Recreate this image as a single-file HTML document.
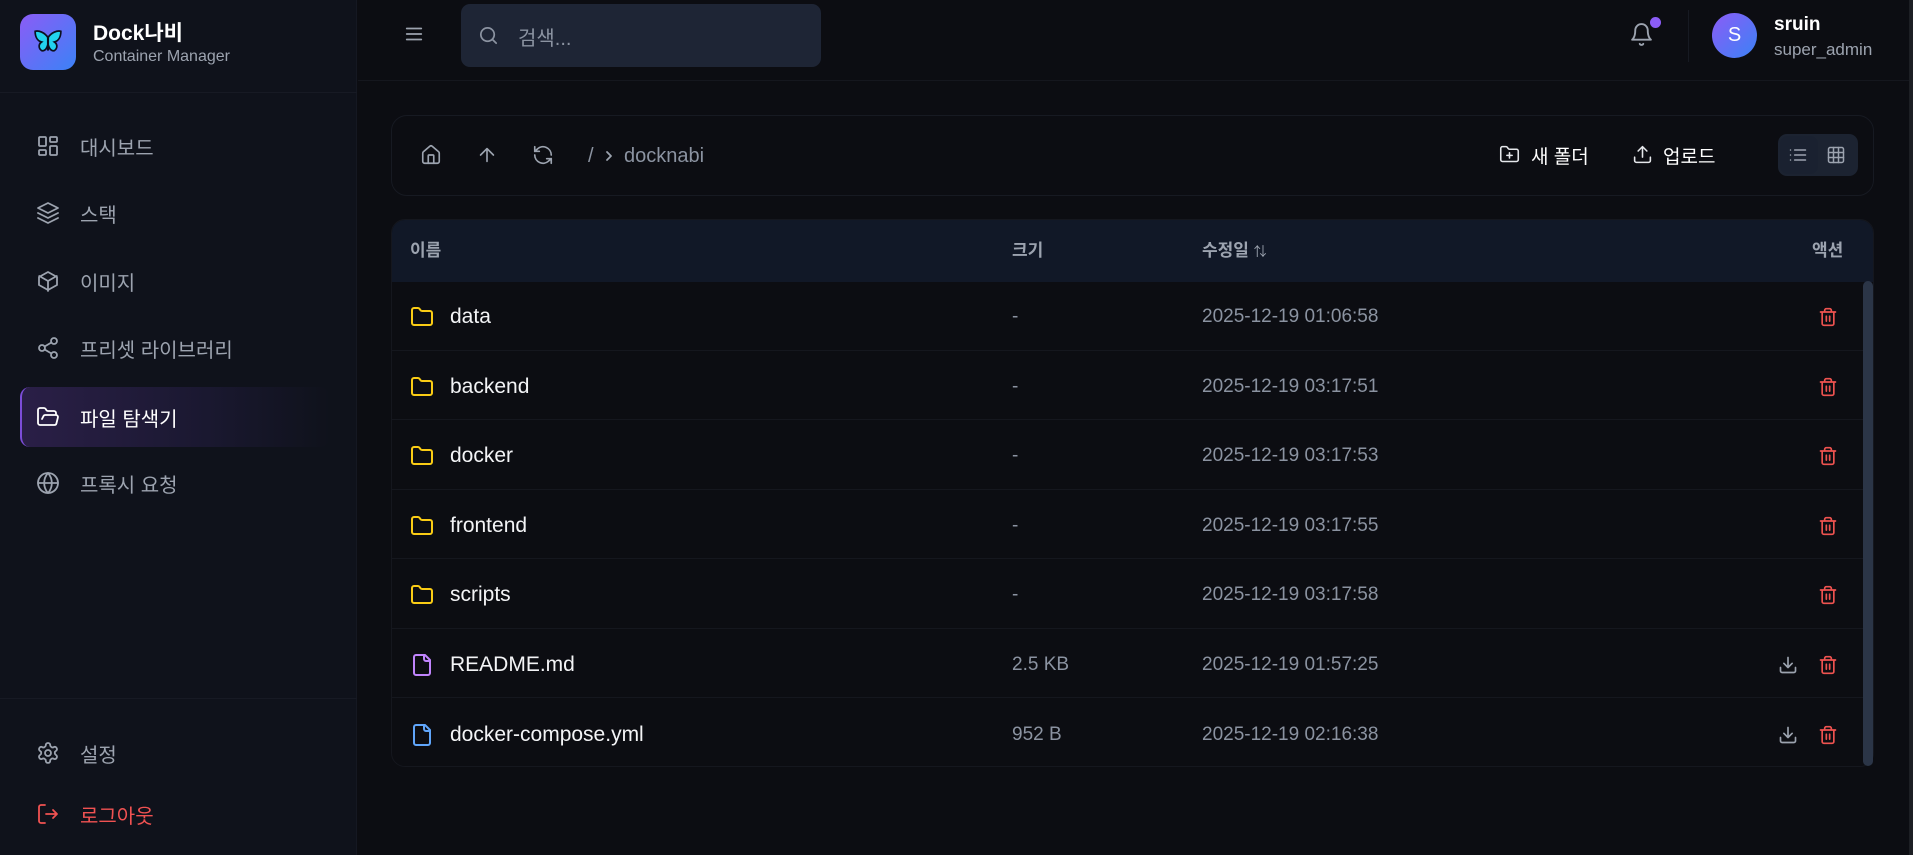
<!DOCTYPE html>
<html><head><meta charset="utf-8"><style>
*{margin:0;padding:0;box-sizing:border-box}
body{width:1913px;height:855px;background:#0c0d12;font-family:"Liberation Sans","Noto Sans CJK KR",sans-serif;color:#e5e7eb;position:relative;overflow:hidden}
.sb{position:absolute;left:0;top:0;width:357px;height:855px;background:#0f121b;border-right:1px solid #151822}
.abs{position:absolute}
.nav{position:absolute;left:20px;width:310px;height:60px;display:flex;align-items:center;padding-left:16px;font-size:20px;color:#9ca3af}
.nav svg{width:24px;height:24px;margin-right:20px;stroke:currentColor;fill:none;stroke-width:1.8;stroke-linecap:round;stroke-linejoin:round}
.ic{stroke:currentColor;fill:none;stroke-width:1.8;stroke-linecap:round;stroke-linejoin:round}
.row{position:absolute;left:391px;width:1472px;height:69.5px;border-bottom:1px solid #15171e;display:flex;align-items:center;font-size:19px;padding-top:4px}
.row .n{position:absolute;left:19px;display:flex;align-items:center;color:#f3f4f6;font-size:21px}
.row .n svg{width:24px;height:24px;margin-right:16px}
.row .s{position:absolute;left:621px;color:#8b93a1}
.row .d{position:absolute;left:811px;color:#8b93a1}
.row .tr{position:absolute;left:1427px;width:20px;height:20px;color:#ef5350}
.row .dl{position:absolute;left:1387px;width:20px;height:20px;color:#9ca3af}
</style></head><body>
<div class="sb">
  <div class="abs" style="left:20px;top:14px;width:56px;height:56px;border-radius:13px;background:linear-gradient(135deg,#8b5cf6,#3b82f6);display:flex;align-items:center;justify-content:center">
    <svg width="30" height="26" viewBox="0 0 28 24"><path d="M14 8C11 3 5 1 2 2c0 5 2 9 6 10-3 2-3 6 0 8 3 1 5-2 6-6 1 4 3 7 6 6 3-2 3-6 0-8 4-1 6-5 6-10-3-1-9 1-12 6z" fill="#22d3ee" stroke="#0b1020" stroke-width="1.6"/><path d="M14 7v13" stroke="#0b1020" stroke-width="2"/></svg>
  </div>
  <div class="abs" style="left:93px;top:17px;font-size:21px;font-weight:bold;color:#fff">Dock나비</div>
  <div class="abs" style="left:93px;top:48px;font-size:16px;color:#9ca3af">Container Manager</div>
  <div class="abs" style="left:0;top:92px;width:357px;height:1px;background:#171a24"></div>

  <div class="nav" style="top:116px"><svg viewBox="0 0 24 24"><rect x="3" y="3" width="7" height="9" rx="1"/><rect x="14" y="3" width="7" height="5" rx="1"/><rect x="14" y="12" width="7" height="9" rx="1"/><rect x="3" y="16" width="7" height="5" rx="1"/></svg>대시보드</div>
  <div class="nav" style="top:183px"><svg viewBox="0 0 24 24"><path d="M12 2 2 7l10 5 10-5-10-5z"/><path d="M2 12l10 5 10-5"/><path d="M2 17l10 5 10-5"/></svg>스택</div>
  <div class="nav" style="top:251px"><svg viewBox="0 0 24 24"><path d="M21 16V8l-9-5-9 5v8l9 5 9-5z"/><path d="M3.3 7 12 12l8.7-5M12 22V12"/></svg>이미지</div>
  <div class="nav" style="top:318px"><svg viewBox="0 0 24 24"><circle cx="18" cy="5" r="3"/><circle cx="6" cy="12" r="3"/><circle cx="18" cy="19" r="3"/><path d="m8.6 13.5 6.8 4M15.4 6.5l-6.8 4"/></svg>프리셋 라이브러리</div>
  <div class="nav" style="top:387px;background:linear-gradient(90deg,#2a1f47,#1a1830 60%,rgba(20,20,35,0));border-left:2px solid #7c4dd8;border-radius:10px;color:#fff;padding-left:14px"><svg viewBox="0 0 24 24"><path d="m6 14 1.5-2.9A2 2 0 0 1 9.2 10H20a2 2 0 0 1 1.9 2.5l-1.5 6A2 2 0 0 1 18.4 20H4a2 2 0 0 1-2-2V5a2 2 0 0 1 2-2h3.9a2 2 0 0 1 1.7.9l.8 1.2a2 2 0 0 0 1.7.9H18a2 2 0 0 1 2 2v2"/></svg>파일 탐색기</div>
  <div class="nav" style="top:453px"><svg viewBox="0 0 24 24"><circle cx="12" cy="12" r="10"/><path d="M2 12h20M12 2a15 15 0 0 1 0 20 15 15 0 0 1 0-20"/></svg>프록시 요청</div>

  <div class="abs" style="left:0;top:698px;width:357px;height:1px;background:#171a24"></div>
  <div class="nav" style="top:723px"><svg viewBox="0 0 24 24"><path d="M12.2 2h-.4a2 2 0 0 0-2 2v.2a2 2 0 0 1-1 1.7l-.4.3a2 2 0 0 1-2 0l-.2-.1a2 2 0 0 0-2.7.7l-.2.4a2 2 0 0 0 .7 2.7l.2.1a2 2 0 0 1 1 1.7v.5a2 2 0 0 1-1 1.7l-.2.1a2 2 0 0 0-.7 2.7l.2.4a2 2 0 0 0 2.7.7l.2-.1a2 2 0 0 1 2 0l.4.3a2 2 0 0 1 1 1.7v.2a2 2 0 0 0 2 2h.4a2 2 0 0 0 2-2v-.2a2 2 0 0 1 1-1.7l.4-.3a2 2 0 0 1 2 0l.2.1a2 2 0 0 0 2.7-.7l.2-.4a2 2 0 0 0-.7-2.7l-.2-.1a2 2 0 0 1-1-1.7v-.5a2 2 0 0 1 1-1.7l.2-.1a2 2 0 0 0 .7-2.7l-.2-.4a2 2 0 0 0-2.7-.7l-.2.1a2 2 0 0 1-2 0l-.4-.3a2 2 0 0 1-1-1.7V4a2 2 0 0 0-2-2z"/><circle cx="12" cy="12" r="3"/></svg>설정</div>
  <div class="nav" style="top:784px;color:#f05252"><svg viewBox="0 0 24 24"><path d="M9 21H5a2 2 0 0 1-2-2V5a2 2 0 0 1 2-2h4"/><path d="M10 12h11M17 8l4 4-4 4"/></svg>로그아웃</div>
</div>

<!-- header -->
<div class="abs" style="left:358px;top:80px;width:1555px;height:1px;background:#15171e"></div>
<svg class="abs ic" style="left:403px;top:23px;color:#9ca3af" width="22" height="22" viewBox="0 0 24 24"><path d="M4 6h16M4 12h16M4 18h16"/></svg>
<div class="abs" style="left:461px;top:4px;width:360px;height:63px;background:#1e2535;border-radius:9px"></div>
<svg class="abs ic" style="left:477px;top:24px;color:#8b93a1" width="23" height="23" viewBox="0 0 24 24"><circle cx="11" cy="11" r="7"/><path d="m20 20-4-4"/></svg>
<div class="abs" style="left:518px;top:22px;font-size:20px;color:#8b93a1">검색...</div>
<svg class="abs ic" style="left:1629px;top:22px;color:#9ca3af" width="25" height="25" viewBox="0 0 24 24"><path d="M6 8a6 6 0 0 1 12 0c0 7 3 9 3 9H3s3-2 3-9"/><path d="M10.3 21a1.9 1.9 0 0 0 3.4 0"/></svg>
<div class="abs" style="left:1650px;top:17px;width:11px;height:11px;border-radius:50%;background:#8b5cf6"></div>
<div class="abs" style="left:1688px;top:10px;width:1px;height:52px;background:#171a22"></div>
<div class="abs" style="left:1712px;top:13px;width:45px;height:45px;border-radius:50%;background:linear-gradient(135deg,#8b5cf6,#3b82f6);color:#fff;font-size:20px;display:flex;align-items:center;justify-content:center">S</div>
<div class="abs" style="left:1774px;top:14px;font-size:19px;font-weight:bold;color:#fff">sruin</div>
<div class="abs" style="left:1774px;top:40px;font-size:17px;color:#9ca3af">super_admin</div>
<div class="abs" style="left:1909px;top:0;width:4px;height:855px;background:#1d1f24"></div>

<!-- toolbar -->
<div class="abs" style="left:391px;top:115px;width:1483px;height:81px;border:1px solid #171a22;border-radius:16px"></div>
<svg class="abs ic" style="left:420px;top:144px;color:#9ca3af" width="22" height="22" viewBox="0 0 24 24"><path d="M15 21v-8a1 1 0 0 0-1-1h-4a1 1 0 0 0-1 1v8"/><path d="M3 10a2 2 0 0 1 .7-1.5l7-6a2 2 0 0 1 2.6 0l7 6A2 2 0 0 1 21 10v9a2 2 0 0 1-2 2H5a2 2 0 0 1-2-2z"/></svg>
<svg class="abs ic" style="left:476px;top:144px;color:#9ca3af" width="22" height="22" viewBox="0 0 24 24"><path d="m5 12 7-7 7 7M12 19V5"/></svg>
<svg class="abs ic" style="left:532px;top:144px;color:#9ca3af" width="22" height="22" viewBox="0 0 24 24"><path d="M21 12a9 9 0 0 0-15-6.7L3 8"/><path d="M3 3v5h5"/><path d="M3 12a9 9 0 0 0 15 6.7l3-2.7"/><path d="M16 16h5v5"/></svg>
<div class="abs" style="left:588px;top:145px;font-size:20px;color:#8b93a1">/</div>
<svg class="abs ic" style="left:603px;top:149px;color:#9ca3af" width="12" height="14" viewBox="0 0 12 14"><path d="m4 3 4 4-4 4"/></svg>
<div class="abs" style="left:624px;top:145px;font-size:20px;color:#8b93a1">docknabi</div>

<svg class="abs ic" style="left:1499px;top:144px;color:#e5e7eb" width="21" height="21" viewBox="0 0 24 24"><path d="M12 10v6M9 13h6"/><path d="M20 20a2 2 0 0 0 2-2V8a2 2 0 0 0-2-2h-7.9a2 2 0 0 1-1.7-.9l-.8-1.2A2 2 0 0 0 7.9 3H4a2 2 0 0 0-2 2v13a2 2 0 0 0 2 2z"/></svg>
<div class="abs" style="left:1531px;top:142px;font-size:19px;color:#fff">새 폴더</div>
<svg class="abs ic" style="left:1632px;top:144px;color:#e5e7eb" width="21" height="21" viewBox="0 0 24 24"><path d="M21 15v4a2 2 0 0 1-2 2H5a2 2 0 0 1-2-2v-4M17 8l-5-5-5 5M12 3v12"/></svg>
<div class="abs" style="left:1663px;top:142px;font-size:19px;color:#fff">업로드</div>
<div class="abs" style="left:1778px;top:134px;width:80px;height:42px;background:#1c2331;border-radius:9px"></div>
<div class="abs" style="left:1780px;top:136px;width:38px;height:38px;background:#1a2130;border-radius:8px"></div>
<svg class="abs ic" style="left:1788px;top:145px;color:#9ca3af" width="20" height="20" viewBox="0 0 24 24"><path d="M3 6h.01M3 12h.01M3 18h.01M8 6h13M8 12h13M8 18h13"/></svg>
<svg class="abs ic" style="left:1826px;top:145px;color:#9ca3af" width="20" height="20" viewBox="0 0 24 24"><rect x="3" y="3" width="18" height="18" rx="2"/><path d="M3 9h18M3 15h18M9 3v18M15 3v18"/></svg>

<!-- table -->
<div class="abs" style="left:391px;top:219px;width:1483px;height:548px;border:1px solid #15171e;border-radius:14px;overflow:hidden">
  <div style="height:62px;background:#111827"></div>
</div>
<div class="abs" style="left:410px;top:236px;font-size:17px;font-weight:bold;color:#9ca3af">이름</div>
<div class="abs" style="left:1012px;top:236px;font-size:17px;font-weight:bold;color:#9ca3af">크기</div>
<div class="abs" style="left:1202px;top:236px;font-size:17px;font-weight:bold;color:#9ca3af">수정일 <span style="font-size:13px;font-weight:normal">⇅</span></div>
<div class="abs" style="left:1812px;top:236px;font-size:17px;font-weight:bold;color:#9ca3af">액션</div>
<div class="abs" style="left:1863px;top:281px;width:10px;height:485px;background:#2b3547;border-radius:5px"></div>

<svg width="0" height="0" style="position:absolute"><defs>
<symbol id="fold" viewBox="0 0 24 24"><path d="M20 20a2 2 0 0 0 2-2V8a2 2 0 0 0-2-2h-7.9a2 2 0 0 1-1.7-.9l-.8-1.2A2 2 0 0 0 7.9 3H4a2 2 0 0 0-2 2v13a2 2 0 0 0 2 2z" fill="none" stroke="#facc15" stroke-width="2" stroke-linejoin="round"/></symbol>
<symbol id="trash" viewBox="0 0 24 24"><path d="M3 6h18M19 6v14a2 2 0 0 1-2 2H7a2 2 0 0 1-2-2V6M8 6V4a2 2 0 0 1 2-2h4a2 2 0 0 1 2 2v2M10 11v6M14 11v6" fill="none" stroke="currentColor" stroke-width="2" stroke-linecap="round" stroke-linejoin="round"/></symbol>
<symbol id="dl" viewBox="0 0 24 24"><path d="M21 15v4a2 2 0 0 1-2 2H5a2 2 0 0 1-2-2v-4M7 10l5 5 5-5M12 15V3" fill="none" stroke="currentColor" stroke-width="2" stroke-linecap="round" stroke-linejoin="round"/></symbol>
<symbol id="file" viewBox="0 0 24 24"><path d="M15 2H6a2 2 0 0 0-2 2v16a2 2 0 0 0 2 2h12a2 2 0 0 0 2-2V7z M14 2v4a2 2 0 0 0 2 2h4" fill="none" stroke="currentColor" stroke-width="2" stroke-linejoin="round"/></symbol>
</defs></svg>

<div class="row" style="top:281px"><div class="n"><svg><use href="#fold"/></svg>data</div><div class="s">-</div><div class="d">2025-12-19 01:06:58</div><svg class="tr"><use href="#trash"/></svg></div>
<div class="row" style="top:350.5px"><div class="n"><svg><use href="#fold"/></svg>backend</div><div class="s">-</div><div class="d">2025-12-19 03:17:51</div><svg class="tr"><use href="#trash"/></svg></div>
<div class="row" style="top:420px"><div class="n"><svg><use href="#fold"/></svg>docker</div><div class="s">-</div><div class="d">2025-12-19 03:17:53</div><svg class="tr"><use href="#trash"/></svg></div>
<div class="row" style="top:489.5px"><div class="n"><svg><use href="#fold"/></svg>frontend</div><div class="s">-</div><div class="d">2025-12-19 03:17:55</div><svg class="tr"><use href="#trash"/></svg></div>
<div class="row" style="top:559px"><div class="n"><svg><use href="#fold"/></svg>scripts</div><div class="s">-</div><div class="d">2025-12-19 03:17:58</div><svg class="tr"><use href="#trash"/></svg></div>
<div class="row" style="top:628.5px"><div class="n"><svg style="color:#c084fc"><use href="#file"/></svg>README.md</div><div class="s">2.5 KB</div><div class="d">2025-12-19 01:57:25</div><svg class="dl"><use href="#dl"/></svg><svg class="tr"><use href="#trash"/></svg></div>
<div class="row" style="top:698px;border-bottom:none"><div class="n"><svg style="color:#60a5fa"><use href="#file"/></svg>docker-compose.yml</div><div class="s">952 B</div><div class="d">2025-12-19 02:16:38</div><svg class="dl"><use href="#dl"/></svg><svg class="tr"><use href="#trash"/></svg></div>
</body></html>
